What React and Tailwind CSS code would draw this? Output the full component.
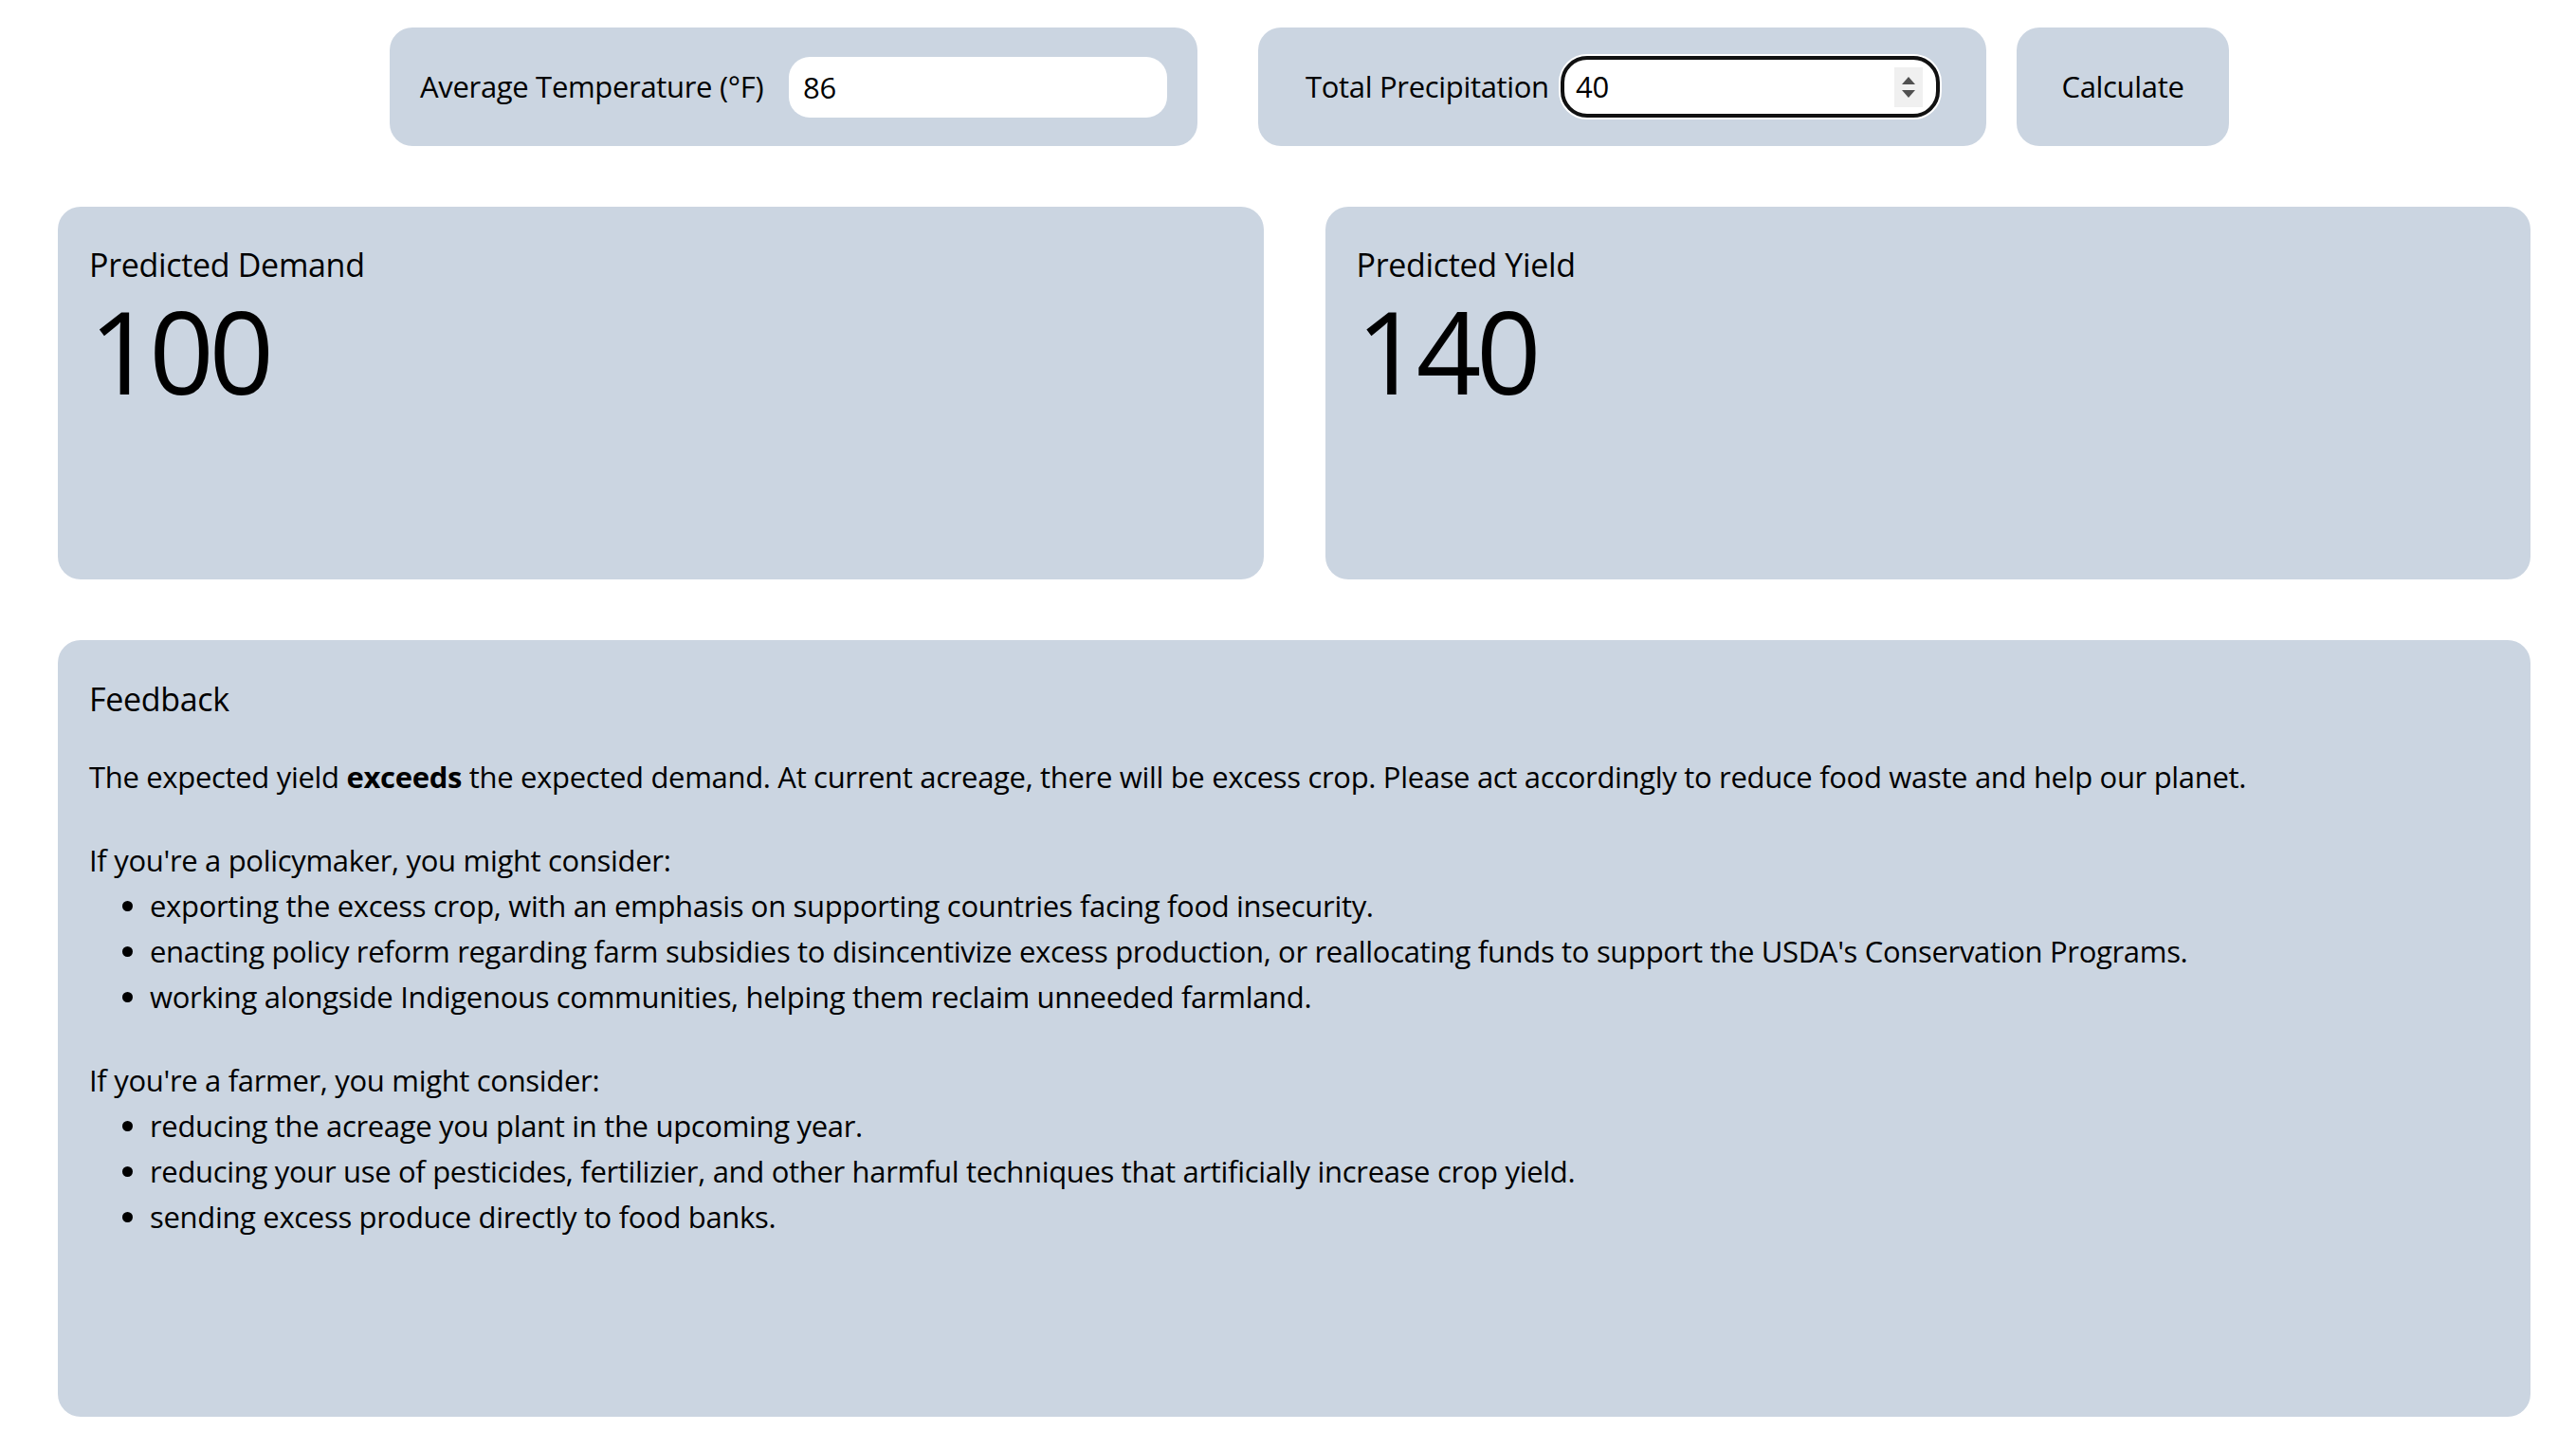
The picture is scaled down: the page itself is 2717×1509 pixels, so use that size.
import React, { useState } from 'react';

const font = { fontFamily: '"Open Sans", "Noto Sans", sans-serif' };

const Spinner = () => (
    <div className="flex flex-col items-center justify-center gap-[6px] w-[30px] h-[42px] bg-[#f0f0f0]">
        <svg width="14" height="8" viewBox="0 0 14 8"><path d="M7 0 L14 8 L0 8 Z" fill="#505050" /></svg>
        <svg width="14" height="8" viewBox="0 0 14 8"><path d="M0 0 L14 0 L7 8 Z" fill="#505050" /></svg>
    </div>
);

const StatCard = ({ title, value }) => (
    <div className="h-[393px] rounded-[24px] bg-[#cbd5e1] px-[33px] pt-[34px]">
        <div className="text-[34px] leading-[54px]">{title}</div>
        <div className="mt-[4px] text-[120px] leading-[120px] tracking-[-0.045em]">{value}</div>
    </div>
);

const App = () => {
    const [temp, setTemp] = useState('86');
    const [precip, setPrecip] = useState('40');

    return (
        <div className="min-h-screen bg-white text-black pl-[61px] pr-[48px] pt-[29px] tracking-[-0.02em]" style={font}>
            {/* inputs row */}
            <div className="flex justify-center pl-[32px]">
                <div className="flex items-center w-[852px] h-[125px] rounded-[24px] bg-[#cbd5e1] pl-[32px] pr-[32px]">
                    <label className="text-[31px] whitespace-nowrap">Average Temperature (°F)</label>
                    <input
                        type="text"
                        value={temp}
                        onChange={(e) => setTemp(e.target.value)}
                        className="ml-auto w-[399px] h-[64px] rounded-[22px] bg-white px-[15px] text-[31px] outline-none"
                    />
                </div>

                <div className="ml-[64px] flex items-center w-[768px] h-[125px] rounded-[24px] bg-[#cbd5e1] pl-[50px] pr-[47px]">
                    <label className="text-[31px] whitespace-nowrap">Total Precipitation</label>
                    <div className="ml-auto flex items-center w-[404px] h-[69px] rounded-[30px] border-[2px] border-white">
                        <div className="flex items-center w-full h-full rounded-[28px] border-[4px] border-[#111] bg-white pl-[12px] pr-[14px]">
                            <input
                                type="text"
                                value={precip}
                                onChange={(e) => setPrecip(e.target.value)}
                                className="flex-1 min-w-0 bg-transparent text-[31px] outline-none"
                            />
                            <Spinner />
                        </div>
                    </div>
                </div>

                <button className="ml-[32px] w-[224px] h-[125px] rounded-[24px] bg-[#cbd5e1] text-[31px]">
                    Calculate
                </button>
            </div>

            {/* predictions */}
            <div className="mt-[64px] grid grid-cols-2 gap-[65px]">
                <StatCard title="Predicted Demand" value="100" />
                <StatCard title="Predicted Yield" value="140" />
            </div>

            {/* feedback */}
            <div className="mt-[64px] h-[819px] rounded-[24px] bg-[#cbd5e1] px-[33px] pt-[35px] text-[31px] leading-[48px]">
                <div className="mb-[31px] text-[34px] leading-[54px]">Feedback</div>
                <p className="mb-[40px]">
                    The expected yield <b>exceeds</b> the expected demand. At current acreage, there will be excess crop. Please act accordingly to reduce food waste and help our planet.
                </p>
                <div className="mb-[40px]">
                    <p>If you're a policymaker, you might consider:</p>
                    <ul className="list-disc pl-[64px]">
                        <li>exporting the excess crop, with an emphasis on supporting countries facing food insecurity.</li>
                        <li>enacting policy reform regarding farm subsidies to disincentivize excess production, or reallocating funds to support the USDA's Conservation Programs.</li>
                        <li>working alongside Indigenous communities, helping them reclaim unneeded farmland.</li>
                    </ul>
                </div>
                <div>
                    <p>If you're a farmer, you might consider:</p>
                    <ul className="list-disc pl-[64px]">
                        <li>reducing the acreage you plant in the upcoming year.</li>
                        <li>reducing your use of pesticides, fertilizier, and other harmful techniques that artificially increase crop yield.</li>
                        <li>sending excess produce directly to food banks.</li>
                    </ul>
                </div>
            </div>
        </div>
    );
};

export default App;
